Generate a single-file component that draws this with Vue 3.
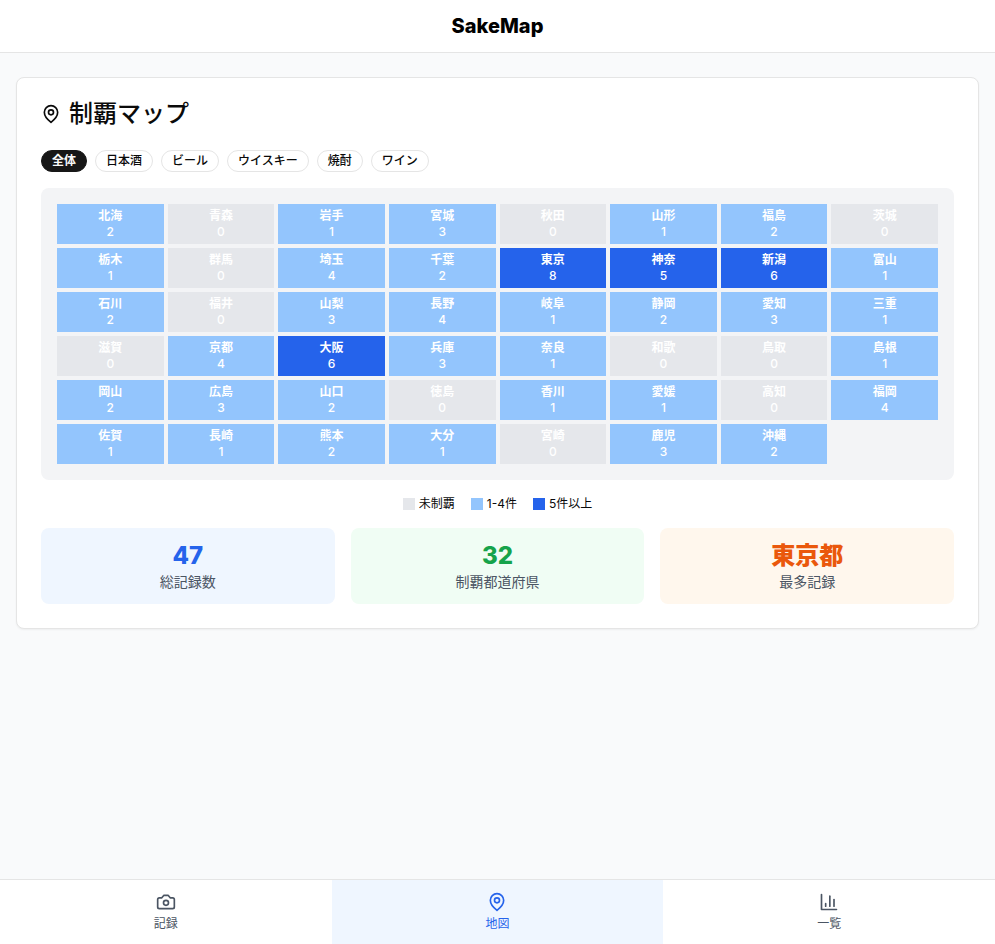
<script setup>
import { ref } from 'vue'

const categories = ['全体', '日本酒', 'ビール', 'ウイスキー', '焼酎', 'ワイン']
const category = ref('全体')
const tab = ref('map')

const prefectures = [
  ['北海', 2], ['青森', 0], ['岩手', 1], ['宮城', 3], ['秋田', 0], ['山形', 1], ['福島', 2], ['茨城', 0],
  ['栃木', 1], ['群馬', 0], ['埼玉', 4], ['千葉', 2], ['東京', 8], ['神奈', 5], ['新潟', 6], ['富山', 1],
  ['石川', 2], ['福井', 0], ['山梨', 3], ['長野', 4], ['岐阜', 1], ['静岡', 2], ['愛知', 3], ['三重', 1],
  ['滋賀', 0], ['京都', 4], ['大阪', 6], ['兵庫', 3], ['奈良', 1], ['和歌', 0], ['鳥取', 0], ['島根', 1],
  ['岡山', 2], ['広島', 3], ['山口', 2], ['徳島', 0], ['香川', 1], ['愛媛', 1], ['高知', 0], ['福岡', 4],
  ['佐賀', 1], ['長崎', 1], ['熊本', 2], ['大分', 1], ['宮崎', 0], ['鹿児', 3], ['沖縄', 2],
]

const level = (count) => (count >= 5 ? 'high' : count > 0 ? 'low' : 'none')

const legend = [
  { level: 'none', label: '未制覇' },
  { level: 'low', label: '1-4件' },
  { level: 'high', label: '5件以上' },
]

const stats = [
  { tone: 'blue', value: '47', label: '総記録数' },
  { tone: 'green', value: '32', label: '制覇都道府県' },
  { tone: 'orange', value: '東京都', label: '最多記録' },
]
</script>

<template>
  <div class="app">
    <header class="header">
      <h1>SakeMap</h1>
    </header>

    <main class="main">
      <section class="card">
        <h2 class="title">
          <svg class="icon" viewBox="0 0 24 24" aria-hidden="true">
            <path d="M20 10c0 6-8 12-8 12s-8-6-8-12a8 8 0 0 1 16 0Z" />
            <circle cx="12" cy="10" r="3" />
          </svg>
          <span>制覇マップ</span>
        </h2>

        <div class="filters">
          <button
            v-for="name in categories"
            :key="name"
            type="button"
            class="chip"
            :class="{ active: category === name }"
            @click="category = name"
          >{{ name }}</button>
        </div>

        <div class="map">
          <div v-for="[name, count] in prefectures" :key="name" class="cell" :class="level(count)">
            <span class="name">{{ name }}</span>
            <span>{{ count }}</span>
          </div>
        </div>

        <div class="legend">
          <div v-for="item in legend" :key="item.level" class="legend-item">
            <span class="swatch" :class="item.level"></span>
            <span>{{ item.label }}</span>
          </div>
        </div>

        <div class="stats">
          <div v-for="stat in stats" :key="stat.label" class="stat" :class="stat.tone">
            <div class="value">{{ stat.value }}</div>
            <div class="label">{{ stat.label }}</div>
          </div>
        </div>
      </section>
    </main>

    <nav class="nav">
      <button type="button" :class="{ active: tab === 'record' }" @click="tab = 'record'">
        <svg class="icon" viewBox="0 0 24 24" aria-hidden="true">
          <path d="M14.5 4h-5L7 7H4a2 2 0 0 0-2 2v9a2 2 0 0 0 2 2h16a2 2 0 0 0 2-2V9a2 2 0 0 0-2-2h-3l-2.5-3z" />
          <circle cx="12" cy="13" r="3" />
        </svg>
        <span>記録</span>
      </button>
      <button type="button" :class="{ active: tab === 'map' }" @click="tab = 'map'">
        <svg class="icon" viewBox="0 0 24 24" aria-hidden="true">
          <path d="M20 10c0 6-8 12-8 12s-8-6-8-12a8 8 0 0 1 16 0Z" />
          <circle cx="12" cy="10" r="3" />
        </svg>
        <span>地図</span>
      </button>
      <button type="button" :class="{ active: tab === 'list' }" @click="tab = 'list'">
        <svg class="icon" viewBox="0 0 24 24" aria-hidden="true">
          <path d="M3 3v18h18" />
          <path d="M18 17V9" />
          <path d="M13 17V5" />
          <path d="M8 17v-3" />
        </svg>
        <span>一覧</span>
      </button>
    </nav>
  </div>
</template>

<style>
body {
  margin: 0;
  background: #f9fafb;
}
</style>

<style scoped>
.app {
  display: flex;
  flex-direction: column;
  min-height: 100vh;
  background: #f9fafb;
  color: #0a0a0a;
  font-family: Inter, "Noto Sans CJK JP", sans-serif;
  font-size: 12px;
  line-height: 16px;
}
.app * {
  box-sizing: border-box;
}
.header {
  padding: 12px 16px;
  background: #fff;
  border-bottom: 1px solid #e5e5e5;
  text-align: center;
}
h1 {
  margin: 0;
  color: #000;
  font-size: 20px;
  font-weight: 800;
  line-height: 28px;
}
.main {
  flex: 1;
  padding: 24px 16px;
}
.card {
  padding: 24px;
  background: #fff;
  border: 1px solid #e5e5e5;
  border-radius: 8px;
  box-shadow: 0 1px 2px rgba(0, 0, 0, 0.05);
}
.icon {
  width: 20px;
  height: 20px;
  flex: none;
  fill: none;
  stroke: currentColor;
  stroke-width: 2;
  stroke-linecap: round;
  stroke-linejoin: round;
}
.title {
  display: flex;
  align-items: center;
  gap: 8px;
  margin: 0 0 24px;
  font-size: 24px;
  font-weight: 500;
  line-height: 24px;
}
.filters {
  display: flex;
  flex-wrap: wrap;
  gap: 8px;
  margin-bottom: 16px;
}
.chip {
  padding: 2px 10px;
  border: 1px solid #e5e5e5;
  border-radius: 11px;
  background: #fff;
  color: #0a0a0a;
  font: inherit;
  font-weight: 500;
  cursor: pointer;
}
.chip.active {
  border-color: #171717;
  background: #171717;
  color: #fafafa;
  font-weight: 600;
}
.map {
  display: grid;
  grid-template-columns: repeat(8, 1fr);
  gap: 4px;
  padding: 16px;
  border-radius: 8px;
  background: #f3f4f6;
}
.cell {
  display: flex;
  flex-direction: column;
  align-items: center;
  padding: 4px;
  color: #fff;
  font-weight: 500;
}
.name {
  font-weight: 600;
}
.none {
  background: #e5e7eb;
}
.low {
  background: #93c5fd;
}
.high {
  background: #2563eb;
}
.legend {
  display: flex;
  flex-wrap: wrap;
  justify-content: center;
  gap: 16px;
  margin: 16px 0;
}
.legend-item {
  display: flex;
  align-items: center;
  gap: 4px;
}
.swatch {
  width: 12px;
  height: 12px;
}
.stats {
  display: grid;
  grid-template-columns: repeat(3, 1fr);
  gap: 16px;
}
.stat {
  padding: 12px;
  border-radius: 8px;
  text-align: center;
}
.value {
  font-size: 24px;
  font-weight: 800;
  line-height: 32px;
}
.label {
  color: #4b5563;
  font-size: 14px;
  line-height: 20px;
}
.blue {
  background: #eff6ff;
  color: #2563eb;
}
.green {
  background: #f0fdf4;
  color: #16a34a;
}
.orange {
  background: #fff7ed;
  color: #ea580c;
}
.nav {
  position: sticky;
  bottom: 0;
  display: grid;
  grid-template-columns: repeat(3, 1fr);
  border-top: 1px solid #e5e5e5;
  background: #fff;
}
.nav button {
  display: flex;
  flex-direction: column;
  align-items: center;
  gap: 4px;
  padding: 12px 8px;
  border: 0;
  background: transparent;
  color: #4b5563;
  font: inherit;
  cursor: pointer;
}
.nav button.active {
  background: #eff6ff;
  color: #2563eb;
}
</style>
